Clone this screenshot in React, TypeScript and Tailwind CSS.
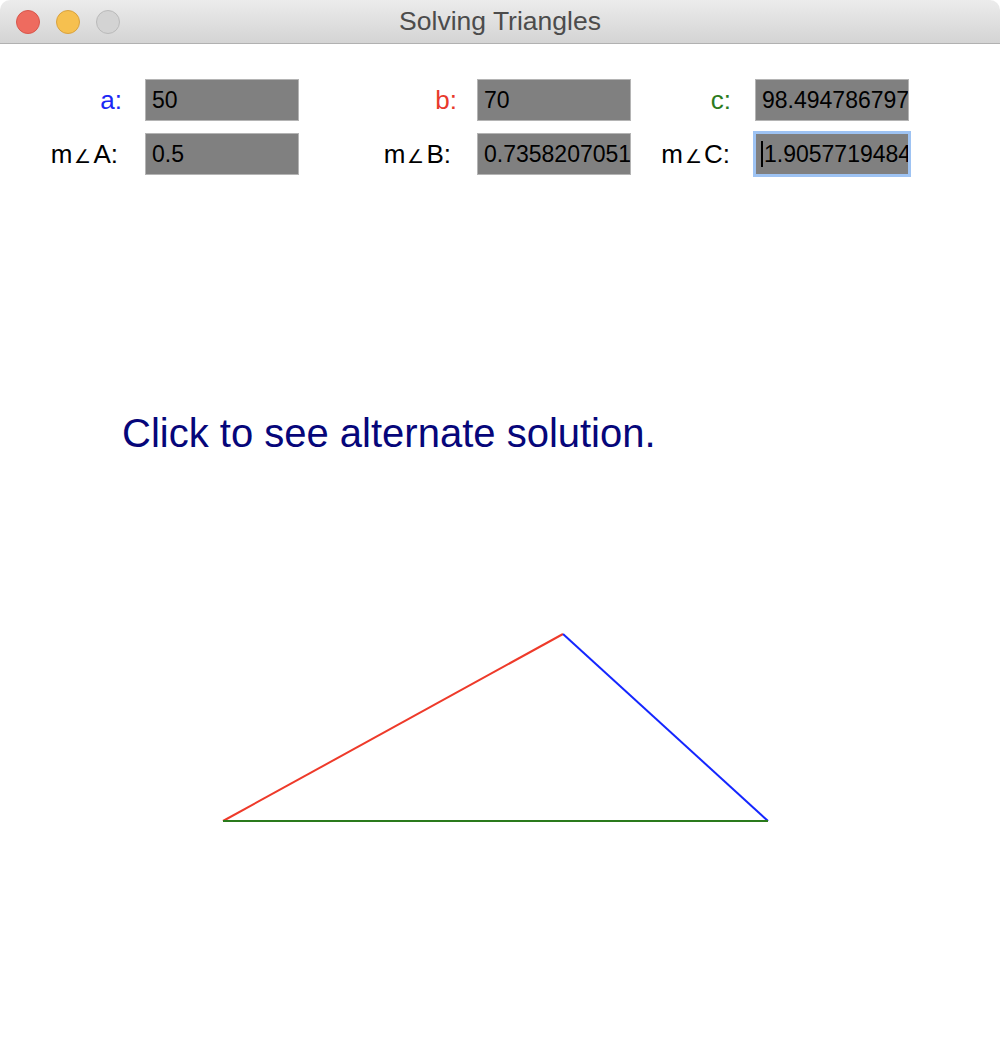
import React from "react";

const font = { fontFamily: '"Liberation Sans", Arial, Helvetica, sans-serif' };

function Field({ value, focused }: { value: string; focused?: boolean }) {
  return (
    <div
      className={
        focused
          ? "w-[154px] h-[42px] bg-[#808080] border border-[#9ec3f3] ring-2 ring-[#9ec3f3] flex items-center pl-[5px] overflow-hidden whitespace-nowrap text-[23px] text-black"
          : "w-[154px] h-[42px] bg-[#808080] border border-[#b4b4b4] flex items-center pl-[6px] overflow-hidden whitespace-nowrap text-[23px] text-black"
      }
    >
      {focused && <span className="inline-block w-[2px] h-[26px] bg-black mr-[1px] shrink-0" />}
      <span>{value}</span>
    </div>
  );
}

function AngleLabel({ letter, pad }: { letter: string; pad: string }) {
  return (
    <div className={"text-right text-black " + pad}>
      m<span className="text-[19px] px-[2px]">∠</span>
      {letter}:
    </div>
  );
}

export default function App() {
  return (
    <div className="w-[1000px] h-[1044px] bg-white flex flex-col overflow-hidden" style={font}>
      {/* title bar */}
      <div className="relative h-[44px] shrink-0 rounded-t-[10px] border-b border-[#b1b1b1] bg-gradient-to-b from-[#ececec] to-[#d4d4d4] flex items-center">
        <div className="flex gap-[16px] pl-[16px]">
          <div className="w-[24px] h-[24px] rounded-full bg-[#ee6b5f] border border-[#d8564b]" />
          <div className="w-[24px] h-[24px] rounded-full bg-[#f6c04f] border border-[#d9a23f]" />
          <div className="w-[24px] h-[24px] rounded-full bg-[#d3d3d3] border border-[#bababa]" />
        </div>
        <div className="absolute inset-0 flex items-center justify-center text-[26.5px] text-[#4c4c4c]">
          Solving Triangles
        </div>
      </div>

      {/* fields */}
      <div className="pt-[35px] grid grid-cols-[145px_154px_178px_154px_124px_154px] gap-y-[12px] items-center text-[26px]">
        <div className="text-right pr-[23px] text-[#1b27f5]">a:</div>
        <Field value="50" />
        <div className="text-right pr-[20px] text-[#e8392b]">b:</div>
        <Field value="70" />
        <div className="text-right pr-[24px] text-[#2c7b1d]">c:</div>
        <Field value="98.49478679790263" />

        <AngleLabel letter="A" pad="pr-[27px]" />
        <Field value="0.5" />
        <AngleLabel letter="B" pad="pr-[26px]" />
        <Field value="0.7358207051190641" />
        <AngleLabel letter="C" pad="pr-[25px]" />
        <Field value="1.9057719484708364" focused />
      </div>

      <div className="mt-[235px] pl-[122px] text-[40px] leading-[46px] text-[#06067a]">
        Click to see alternate solution.
      </div>

      <svg width="1000" height="588" className="block shrink-0">
        <line x1="223" y1="365" x2="563" y2="178" stroke="#ee3a2a" strokeWidth="2" />
        <line x1="563" y1="178" x2="768" y2="365" stroke="#1426ff" strokeWidth="2" />
        <line x1="223" y1="365" x2="768" y2="365" stroke="#2a7a1c" strokeWidth="2" />
      </svg>
    </div>
  );
}
